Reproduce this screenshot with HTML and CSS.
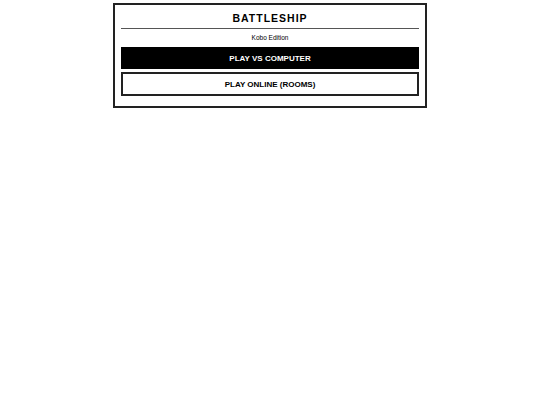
FILE: index.html
```html
<!DOCTYPE html>
<html lang="en">
<head>
    <meta charset="UTF-8">
    <meta name="viewport" content="width=device-width, initial-scale=1.0">
    <title>Battleship</title>
    <link rel="stylesheet" href="styles.css">
</head>
<body>
    <div class="menu">
        <h1 class="title">BATTLESHIP</h1>
        <p class="edition">Kobo Edition</p>
        <button class="btn btn_solid">PLAY VS COMPUTER</button>
        <button class="btn btn_outline">PLAY ONLINE (ROOMS)</button>
    </div>
</body>
</html>
```

FILE: styles.css
```css
body{
    margin: 0px;
    padding-top: 3px;
    background: #fff;
    font-family: "Liberation Sans", Arial, sans-serif;
    color: #000;
}

.menu{
    width: 298px;
    margin: 0 auto;
    border: 2px solid #222;
    padding: 0px 6px 10px;
    display: flex;
    flex-direction: column;
}

.title{
    margin: 0px;
    padding: 6px 0px 3px;
    font-size: 10.5px;
    line-height: 14px;
    font-weight: bold;
    letter-spacing: 1px;
    text-align: center;
    border-bottom: 1px solid #555;
}

.edition{
    margin: 4px 0px;
    font-size: 6.5px;
    line-height: 10px;
    text-align: center;
}

.btn{
    font-family: inherit;
    font-size: 8px;
    font-weight: bold;
    margin: 0px;
    padding: 0px;
    display: flex;
    align-items: center;
    justify-content: center;
    width: 100%;
}

.btn_solid{
    height: 22px;
    background: #000;
    color: #fff;
    border: none;
}

.btn_outline{
    height: 24px;
    margin-top: 3px;
    background: #fff;
    color: #000;
    border: 2px solid #222;
}
```
